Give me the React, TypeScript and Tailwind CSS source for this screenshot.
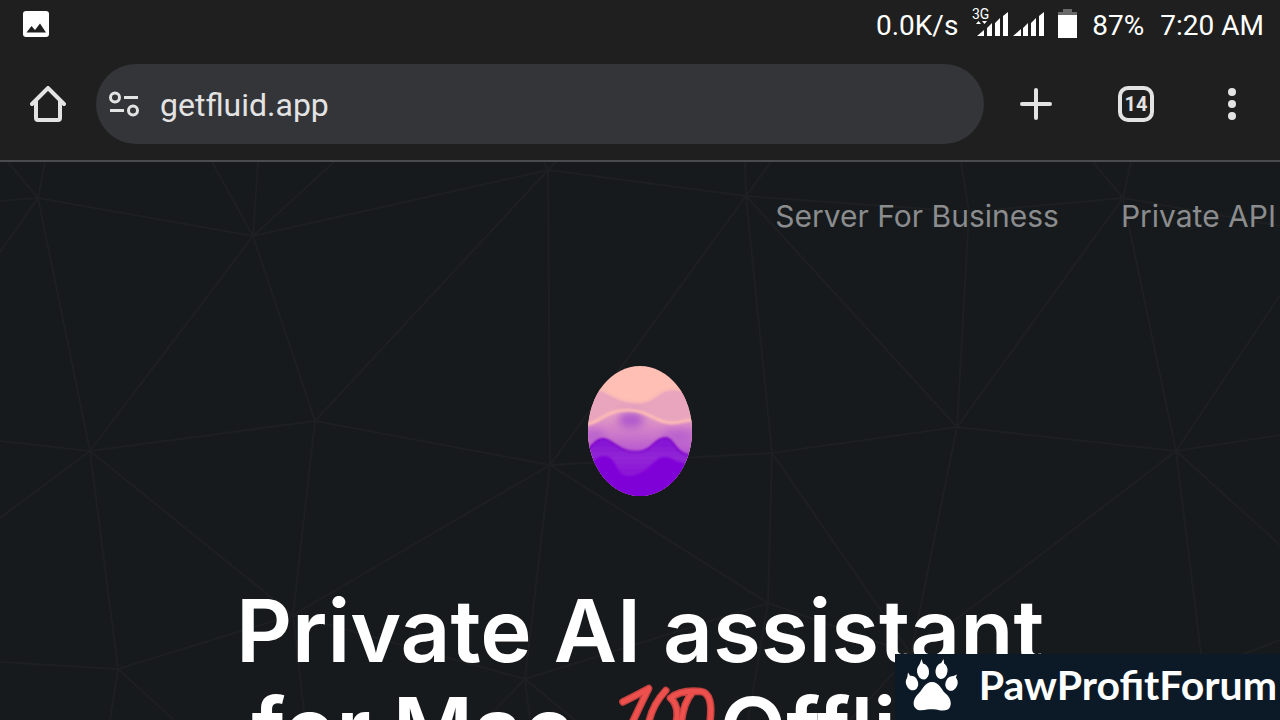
import React from "react";

const mesh = [
  "M38 198L8 162M38 198L45 162M38 198L0 201M38 198L0 252M38 198L253 236M38 198L90 451",
  "M253 236L212 162M253 236L258 162M253 236L334 162M253 236L548 170M253 236L90 451M253 236L315 421",
  "M548 170L544 162M548 170L556 162M548 170L746 196M548 170L315 421M548 170L550 465",
  "M315 421L90 451M315 421L550 465M315 421L293 615",
  "M746 196L745 162M746 196L771 162M746 196L969 212M746 196L550 465M746 196L772 453M746 196L957 427",
  "M969 212L961 162M969 212L1123 198M969 212L957 427",
  "M957 427L1123 198M957 427L1176 451M957 427L772 453M957 427L911 654",
  "M1123 198L1093 162M1123 198L1131 162M1123 198L1280 226M1123 198L1176 451",
  "M1176 451L911 654M1176 451L1280 435M1176 451L1280 295M1176 451L1280 545M1176 451L1203 670",
  "M90 451L0 441M90 451L0 518M90 451L118 669M90 451L293 615",
  "M550 465L772 453M550 465L293 615M550 465L525 679M550 465L768 603",
  "M118 669L0 662M118 669L293 615M118 669L110 720M118 669L174 720",
  "M293 615L305 720M293 615L525 679M525 679L768 603M525 679L485 720M525 679L530 720M525 679L575 720",
  "M768 603L772 453M768 603L911 654M768 603L748 720M772 453L911 654M911 654L850 720M1203 670L1280 640",
];

function Mesh() {
  return (
    <svg
      className="absolute inset-x-0 top-0 w-full"
      viewBox="0 162 1280 558"
      fill="none"
      stroke="#1d1f21"
      strokeWidth="2"
      aria-hidden="true"
    >
      {mesh.map((d) => (
        <path key={d} d={d} />
      ))}
    </svg>
  );
}

function StatusBar() {
  return (
    <div className="flex h-12 items-center justify-between pr-4 pl-[23px] text-[28px] text-white">
      <svg width="26" height="26" viewBox="0 0 26 26" role="img" aria-label="Picture notification">
        <rect width="26" height="26" rx="3" fill="#fff" />
        <path d="M3.5 21.5L8.5 15L12 19L17 12.5L23 21.5Z" fill="#1f1f1f" />
      </svg>
      <div className="flex items-center gap-4">
        <span className="pt-[3px]">0.0K/s</span>
        <svg
          className="overflow-visible"
          width="102"
          height="32"
          viewBox="2 1 102 32"
          role="img"
          aria-label="3G signal and battery"
        >
          <text x="0" y="12" fontSize="14" fill="#fff">
            3G
          </text>
          <g fill="#fff">
            <path d="M4 17l2.500-3 2.500 3zM10 14h5l-2.500 3z" />
            <path d="M5 29h7v-6zM15 29h5v-13l-5 5zM23 29h5v-18l-5 5zM31 29h5v-24l-5 4z" />
            <path d="M41 29h8v-7zM51 29h5v-13l-5 5zM59 29h5v-18l-5 5zM67 29h5v-24l-5 4z" />
            <rect x="86" y="8" width="19" height="23" />
          </g>
          <path d="M86 5h5v-3h9v3h5v3h-19z" fill="#686868" />
        </svg>
        <span className="pt-[3px]">87%</span>
        <span className="pt-[3px]">7:20 AM</span>
      </div>
    </div>
  );
}

function Toolbar() {
  return (
    <div className="flex h-28 items-center pr-8 pl-[30px] text-[#e3e3e3]">
      <button type="button" aria-label="Home">
        <svg width="36" height="36" viewBox="0 0 36 36" fill="none" stroke="currentColor" strokeWidth="4">
          <path d="M2 18L18 2L34 18" strokeLinecap="round" />
          <path d="M6 15V32Q6 34 8 34H28Q30 34 30 32V15" />
        </svg>
      </button>
      <div className="ml-[30px] flex h-20 flex-1 items-center rounded-full bg-[#343539] pl-[13px]">
        <button type="button" aria-label="Site information">
          <svg width="30" height="26" viewBox="0 0 30 26" fill="none" stroke="currentColor" strokeWidth="3">
            <circle cx="6" cy="6.500" r="4.500" />
            <path d="M15 6.500H29M1 19.500H15" />
            <circle cx="24" cy="19.500" r="4.500" />
          </svg>
        </button>
        <input
          type="text"
          aria-label="Address"
          defaultValue="getfluid.app"
          className="ml-[21px] min-w-0 flex-1 bg-transparent pt-[2px] text-[32px] outline-none"
        />
      </div>
      <button type="button" aria-label="New tab" className="ml-9">
        <svg width="32" height="32" viewBox="0 0 32 32" stroke="currentColor" strokeWidth="4" strokeLinecap="round">
          <path d="M16 2V30M2 16H30" />
        </svg>
      </button>
      <button
        type="button"
        aria-label="14 open tabs"
        className="ml-[66px] flex size-9 items-center justify-center rounded-[10px] border-4 border-current text-xl font-bold"
      >
        14
      </button>
      <button type="button" aria-label="Menu" className="ml-[62px]">
        <svg width="32" height="32" viewBox="0 0 32 32" fill="currentColor">
          <circle cx="16" cy="4" r="4" />
          <circle cx="16" cy="16" r="4" />
          <circle cx="16" cy="28" r="4" />
        </svg>
      </button>
    </div>
  );
}

function Egg() {
  return (
    <svg width="104" height="130" viewBox="0 0 104 130" role="img" aria-label="Fluid">
      <defs>
        <clipPath id="egg">
          <ellipse cx="52" cy="65" rx="52" ry="65" />
        </clipPath>
        <linearGradient id="mid" x1="0" y1="44" x2="0" y2="90" gradientUnits="userSpaceOnUse">
          <stop offset="0" stopColor="#eaa6c0" />
          <stop offset="0.5" stopColor="#cd7bca" />
          <stop offset="1" stopColor="#b14fd2" />
        </linearGradient>
        <linearGradient id="low" x1="0" y1="72" x2="0" y2="112" gradientUnits="userSpaceOnUse">
          <stop offset="0" stopColor="#8510d4" />
          <stop offset="0.5" stopColor="#9226d6" />
          <stop offset="1" stopColor="#8a10d6" />
        </linearGradient>
        <filter id="soft" x="-30%" y="-30%" width="160%" height="160%">
          <feGaussianBlur stdDeviation="1" />
        </filter>
        <filter id="haze" x="-60%" y="-60%" width="220%" height="220%">
          <feGaussianBlur stdDeviation="4" />
        </filter>
      </defs>
      <g clipPath="url(#egg)">
        <rect width="104" height="130" fill="#ffbfb5" />
        <path
          d="M-4 25C6 22 12 22 20 27C30 33 38 36 50 36C68 36 68 23 85 23C94 23 98 26 108 30V140H-4Z"
          fill="#e8a5bd"
          filter="url(#soft)"
        />
        <path
          d="M-4 25C6 22 12 22 20 27C30 33 38 36 50 36C68 36 68 23 85 23C94 23 98 26 108 30"
          fill="none"
          stroke="#ffbdb4"
          strokeWidth="2"
          filter="url(#soft)"
        />
        <path
          d="M-4 59C14 57 16 44 40 44C62 44 66 57 84 57C94 57 98 53 108 54V140H-4Z"
          fill="url(#mid)"
        />
        <ellipse cx="43" cy="54" rx="13" ry="8" fill="#af58ce" filter="url(#haze)" />
        <ellipse cx="6" cy="70" rx="11" ry="6" fill="#b860cf" filter="url(#haze)" />
        <ellipse cx="90" cy="70" rx="16" ry="6" fill="#b860cf" filter="url(#haze)" />
        <path
          d="M-4 59C14 57 16 44 40 44C62 44 66 57 84 57C94 57 98 53 108 54"
          fill="none"
          stroke="#ffbdb4"
          strokeWidth="3"
          filter="url(#soft)"
        />
        <path
          d="M-4 87C4 81 8 73 15 73C24 73 30 86 48 86C65 86 66 72 77 72C88 72 84 90 108 90V140H-4Z"
          fill="url(#low)"
          stroke="#7c06cc"
          strokeWidth="2"
          filter="url(#soft)"
        />
        <path
          d="M-4 100C4 97 8 90 17 90C29 91 28 110 40 110C60 110 64 92 76 91C86 91 90 99 108 99V140H-4Z"
          fill="#8000d8"
          filter="url(#soft)"
        />
      </g>
    </svg>
  );
}

function Hundred() {
  const strokes =
    "M6 18Q18 12 33 4Q24 22 10 52M51 6Q34 24 32 48M56 14Q68 24 59 50M56 14Q66 5 88 7Q102 9 97 42M79 8Q67 22 67 50";
  return (
    <svg
      className="inline-block overflow-visible align-baseline"
      width="98"
      height="80"
      viewBox="5 -5 103 84"
      fill="none"
      strokeLinecap="round"
      strokeLinejoin="round"
      role="img"
      aria-label="100"
    >
      <path d={strokes} stroke="#c3413f" strokeWidth="8" />
      <path d={strokes} stroke="#ee504d" strokeWidth="5" />
      <path d="M12 70Q50 54 92 58M32 78Q55 70 80 72" stroke="#ee504d" strokeWidth="6" />
    </svg>
  );
}

function Watermark() {
  return (
    <div className="absolute right-0 bottom-0 flex h-[66px] items-center bg-[#0b1a26] pr-[3px] pb-[6px] pl-[10px] text-white">
      <svg width="54" height="54" viewBox="0 0 54 54" fill="#fff" aria-hidden="true">
        <ellipse cx="7" cy="26" rx="6" ry="7.500" transform="rotate(-20 7 26)" />
        <ellipse cx="18" cy="14.500" rx="6" ry="8" transform="rotate(-8 18 14.500)" />
        <ellipse cx="36.500" cy="14" rx="6" ry="8" transform="rotate(8 36.500 14)" />
        <ellipse cx="46.500" cy="26.500" rx="6" ry="7.500" transform="rotate(20 46.500 26.500)" />
        <path d="M2 22L3 15.500L6 20ZM14 9L16.500 2L18.500 8ZM35 8L38.500 2L39.500 9ZM46 20L52 17.500L50 23Z" />
        <path d="M27 25C34 25 36 32 40 36C45 40 47 45 45 50C43 55 35 53.500 31 52.500C28 52 25 52 22 52.500C18 53.500 12 54.500 9.500 50C7 45 10 40 14 36C18 32 20 25 27 25Z" />
      </svg>
      <span className="ml-5 font-['Lato','Open_Sans',sans-serif] text-[41px] leading-none font-bold">
        PawProfitForum
      </span>
    </div>
  );
}

export default function App() {
  return (
    <div className="relative flex h-screen flex-col overflow-hidden bg-[#171a1d] font-['Roboto',sans-serif]">
      <header className="shrink-0 border-b-2 border-[#4a4b4c] bg-[#1f1f1f]">
        <StatusBar />
        <Toolbar />
      </header>
      <main className="relative flex-1 overflow-hidden font-['Inter',sans-serif]">
        <Mesh />
        <div className="relative">
          <nav className="flex justify-end gap-[62px] pt-8 pr-1 text-[30px] leading-[44px] whitespace-nowrap text-[#8b8c8e]">
            <a href="#server">Server For Business</a>
            <a href="#api">Private API</a>
          </nav>
          <div className="mt-32 flex flex-col items-center">
            <Egg />
            <h1 className="mt-[86px] text-center text-[87px] leading-[98px] font-semibold text-white">
              Private AI assistant
              <br />
              for Mac, <Hundred />
              Offline.
            </h1>
          </div>
        </div>
      </main>
      <Watermark />
    </div>
  );
}
